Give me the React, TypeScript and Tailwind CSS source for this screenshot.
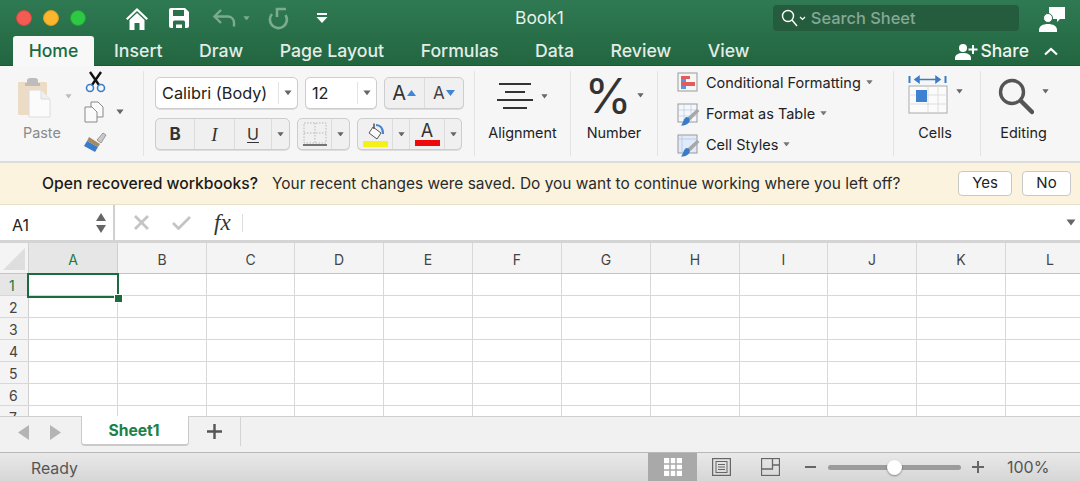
import React from "react";

const Caret = ({ c = "#666", w = 8, className = "" }: { c?: string; w?: number; className?: string }) => (
  <svg width={w} height={w * 0.7} viewBox="0 0 10 7" className={`shrink-0 ${className}`}>
    <path d="M0.5 0.5h9L5 6.5z" fill={c} />
  </svg>
);

const tabs = ["Insert", "Draw", "Page Layout", "Formulas", "Data", "Review", "View"];
const colW = [89, 89, 88, 89, 89, 89, 89, 89, 88, 89, 89, 89];
const cols = ["A", "B", "C", "D", "E", "F", "G", "H", "I", "J", "K", "L"];
const rows = [1, 2, 3, 4, 5, 6];

function Title() {
  return (
    <div className="h-[36px] flex items-center pl-[16px]">
      <div className="flex gap-[11px]">
        <span className="w-[16px] h-[16px] rounded-full bg-[#f25c55] border border-[#d8453f]" />
        <span className="w-[16px] h-[16px] rounded-full bg-[#fbb62d] border border-[#dc9b1f]" />
        <span className="w-[16px] h-[16px] rounded-full bg-[#2fc845] border border-[#1fa434]" />
      </div>
      <svg width="24" height="24" viewBox="0 0 24 24" className="ml-[39px]">
        <path d="M1 12.500 12 2l11 10.500-1.600 1.600L12 5 2.600 14.100z" fill="#fff" />
        <path d="M4.500 14 12 7l7.500 7v10h-5v-7h-5v7h-5z" fill="#fff" />
      </svg>
      <svg width="22" height="22" viewBox="0 0 22 22" className="ml-[19px]">
        <path d="M1 3a2 2 0 0 1 2-2h14l4 4v14a2 2 0 0 1-2 2H3a2 2 0 0 1-2-2z" fill="#fff" />
        <rect x="5" y="3" width="11" height="6" fill="#2a7049" />
        <path d="M5 21v-6a1.500 1.500 0 0 1 1.500-1.500h9A1.500 1.500 0 0 1 17 15v6h-3v-3.500H8V21z" fill="#2a7049" />
      </svg>
      <svg width="25" height="22" viewBox="0 0 25 22" className="ml-[22px]" fill="none" stroke="#7dab90" strokeWidth="2.400">
        <path d="M9 3 2.500 9.500 9 16" />
        <path d="M3 9.500h13a6 6 0 0 1 6 6v4" />
      </svg>
      <Caret c="#7dab90" w={7} className="ml-[6px]" />
      <svg width="22" height="24" viewBox="0 0 22 24" className="ml-[17px]" fill="none" stroke="#7dab90" strokeWidth="2.600">
        <path d="M5 8A8.500 8.500 0 1 0 18.500 9" />
        <path d="M19 3H10v8" />
      </svg>
      <svg width="12" height="12" viewBox="0 0 12 12" className="ml-[27px]">
        <rect x="1" y="1" width="10" height="2" fill="#fff" />
        <path d="M0.500 5h11L6 11z" fill="#fff" />
      </svg>
      <span className="ml-[187px] text-[17.400px] text-[#e6efe9] leading-none">Book1</span>
      <div className="ml-[209px] w-[246px] h-[26px] rounded-[4px] bg-[#255c3d] flex items-center pl-[8px]">
        <svg width="17" height="18" viewBox="0 0 17 18" fill="none" stroke="#fff" strokeWidth="1.400">
          <circle cx="7" cy="7" r="5.500" />
          <path d="m11 11 5 6" />
        </svg>
        <svg width="7" height="5" viewBox="0 0 7 5" fill="none" stroke="#fff" strokeWidth="1.200" className="ml-[1px]">
          <path d="m1 1 2.500 2.500L6 1" />
        </svg>
        <span className="ml-[5px] text-[16.400px] text-[#87a896] font-medium leading-none">Search Sheet</span>
      </div>
      <svg width="26" height="27" viewBox="0 0 26 27" className="ml-[20px]">
        <path d="M10 2h16v12h-5l-3 3v-3h-8z" fill="#fff" />
        <circle cx="9" cy="13" r="4.500" fill="#fff" stroke="#2a7049" strokeWidth="1" />
        <path d="M0 27v-2c0-4 4-6 9-6s9 2 9 6v2z" fill="#fff" />
      </svg>
    </div>
  );
}

function TabRow() {
  return (
    <div className="h-[30px] flex items-stretch pl-[13px] pr-[22px]">
      <div className="w-[81px] bg-[#f8f8f8] rounded-t-[3px] flex items-center justify-center text-[17.600px] text-[#1c6b3f] font-medium">Home</div>
      <div className="flex items-center gap-[36.500px] ml-[20px] text-[17.700px] text-[#e4ece7] font-medium">
        {tabs.map((t) => (
          <span key={t}>{t}</span>
        ))}
      </div>
      <div className="ml-auto flex items-center text-[#eef4f0] font-medium text-[17.500px]">
        <svg width="24" height="17" viewBox="0 0 24 17">
          <circle cx="8" cy="5" r="4" fill="#fff" />
          <path d="M0 17v-2c0-3 3-5 8-5s8 2 8 5v2z" fill="#fff" />
          <path d="M18 2v9M13.500 6.500h9" stroke="#fff" strokeWidth="2" />
        </svg>
        <span className="ml-[2px]">Share</span>
        <svg width="14" height="9" viewBox="0 0 14 9" fill="none" stroke="#fff" strokeWidth="2.200" className="ml-[15px]">
          <path d="m1 7.500 6-5.500 6 5.500" />
        </svg>
      </div>
    </div>
  );
}

const Sep = () => <div className="w-px self-stretch my-[5px] bg-[#e3e3e3]" />;

const Box = ({ className = "", children }: { className?: string; children: React.ReactNode }) => (
  <div className={`h-[32px] rounded-[5px] border border-[#cdcdcd] flex items-center bg-[#f0f0f0] shadow-[0_1px_0_#ddd] ${className}`}>{children}</div>
);

const Seg = ({ className = "", children }: { className?: string; children: React.ReactNode }) => (
  <div className={`h-full flex items-center justify-center border-r border-[#dcdcdc] last:border-r-0 ${className}`}>{children}</div>
);

function ClipGroup() {
  return (
    <div className="w-[143px] shrink-0 flex pl-[18px]">
      <div className="w-[49px] flex flex-col items-start">
        <svg width="33" height="41" viewBox="0 0 33 41" className="mt-[11px]">
          <rect x="0" y="5" width="29" height="33" rx="1" fill="#ecdcc6" />
          <path d="M9 6V3a3 3 0 0 1 3-2h5a3 3 0 0 1 3 2v3h2v3H7V6z" fill="#bdbdbd" />
          <path d="M11 13h12l9 9v18H11z" fill="#fbfbfb" stroke="#dcdcdc" />
          <path d="M23 13v9h9" fill="#f0f0f0" stroke="#dcdcdc" />
        </svg>
        <span className="mt-[8px] ml-[5px] text-[14.400px] text-[#8a8a8a] leading-none">Paste</span>
      </div>
      <Caret c="#bcbcbc" w={7} className="mt-[28px] -ml-[2px]" />
      <div className="ml-[12px] flex flex-col items-start">
        <svg width="21" height="22" viewBox="0 0 21 22" className="mt-[5px] ml-[1px]" fill="none">
          <path d="m5 1 9 13M16 1 7 14" stroke="#111" strokeWidth="2.400" />
          <circle cx="5" cy="17" r="3.500" stroke="#3a7cc8" strokeWidth="1.600" />
          <circle cx="16" cy="17" r="3.500" stroke="#3a7cc8" strokeWidth="1.600" />
        </svg>
        <div className="flex items-center mt-[8px]">
          <svg width="20" height="22" viewBox="0 0 20 22" fill="#fafafa" stroke="#888" strokeWidth="1">
            <path d="M7 1h7l5 5v10H7z" />
            <path d="M1 6h7l5 5v10H1z" />
          </svg>
          <Caret c="#666" w={8} className="ml-[12px]" />
        </div>
        <svg width="24" height="22" viewBox="0 0 24 22" className="mt-[8px] -ml-[1px]">
          <path d="m14 9 6-7 3 2-5 8z" fill="#c9c9c9" stroke="#888" strokeWidth="0.800" />
          <path d="m6 6 11 7-2 3-11-6z" fill="#a68a63" />
          <path d="m4 10 11 6-3 5-11-6z" fill="#3a7cc8" />
        </svg>
      </div>
    </div>
  );
}

function FontGroup() {
  return (
    <div className="w-[330px] shrink-0 pl-[11px] pt-[11px] flex flex-col gap-[9px]">
      <div className="flex gap-[7px]">
        <Box className="w-[143px] bg-white">
          <span className="pl-[6px] text-[16.300px] text-[#222] flex-1 leading-none">Calibri (Body)</span>
          <div className="w-[19px] h-[22px] border-l border-[#e3e3e3] flex items-center justify-center"><Caret /></div>
        </Box>
        <Box className="w-[72px] bg-white">
          <span className="pl-[6px] text-[16.300px] text-[#222] flex-1 leading-none">12</span>
          <div className="w-[19px] h-[22px] border-l border-[#e3e3e3] flex items-center justify-center"><Caret /></div>
        </Box>
        <Box className="w-[80px]">
          <Seg className="w-[40px]">
            <span className="text-[20px] text-[#333] leading-none">A</span>
            <svg width="9" height="6" viewBox="0 0 9 6" className="ml-[1px]"><path d="M0 6h9L4.500 0z" fill="#3f86d4" /></svg>
          </Seg>
          <Seg className="w-[39px]">
            <span className="text-[17px] text-[#444] leading-none">A</span>
            <svg width="9" height="6" viewBox="0 0 9 6" className="ml-[1px]"><path d="M0 0h9L4.500 6z" fill="#3f86d4" /></svg>
          </Seg>
        </Box>
      </div>
      <div className="flex gap-[7px]">
        <Box className="w-[135px]">
          <Seg className="w-[39px]"><span className="text-[17px] font-bold text-[#333] leading-none">B</span></Seg>
          <Seg className="w-[40px]"><span className="text-[19px] italic text-[#333] leading-none font-['Liberation_Serif']">I</span></Seg>
          <Seg className="w-[37px]"><span className="text-[16px] underline underline-offset-2 text-[#333] leading-none">U</span></Seg>
          <Seg className="w-[17px]"><Caret w={7} /></Seg>
        </Box>
        <Box className="w-[53px]">
          <Seg className="w-[35px]">
            <svg width="24" height="24" viewBox="0 0 24 24" fill="none">
              <path d="M1 1h22v20H1zM12 1v20M1 11h22" stroke="#aaa" strokeWidth="0.800" strokeDasharray="1.500 1.500" />
              <path d="M0 23h24" stroke="#555" strokeWidth="1.600" />
            </svg>
          </Seg>
          <Seg className="w-[17px]"><Caret w={7} /></Seg>
        </Box>
        <Box className="w-[105px]">
          <Seg className="w-[35px] flex-col">
            <svg width="20" height="18" viewBox="0 0 20 18" className="mb-[1px]">
              <path d="m8 5 8 6-4 6-8-6z" fill="#fafafa" stroke="#555" />
              <path d="M9 7V1.500" stroke="#555" strokeWidth="1.500" />
              <path d="M11 3c4 0 7 3 7 9" fill="none" stroke="#3f86d4" strokeWidth="2.200" />
            </svg>
            <span className="w-[25px] h-[6px] bg-[#f5f01a]" />
          </Seg>
          <Seg className="w-[17px]"><Caret w={7} /></Seg>
          <Seg className="w-[35px] flex-col">
            <span className="text-[18px] text-[#333] leading-[18px]">A</span>
            <span className="w-[25px] h-[6px] bg-[#ee0a0a]" />
          </Seg>
          <Seg className="w-[16px]"><Caret w={7} /></Seg>
        </Box>
      </div>
    </div>
  );
}

const Label = ({ children }: { children: React.ReactNode }) => (
  <span className="text-[14.400px] text-[#222] leading-none">{children}</span>
);

const Rule = ({ w }: { w: string }) => <div className={`h-[2px] bg-[#333] ${w}`} />;

function StyleRow({ label, kind }: { label: string; kind: number }) {
  return (
    <div className="flex items-center h-[31px]">
      <svg width="23" height="25" viewBox="0 0 23 25" className="shrink-0">
        <rect x="1" y="2" width="19" height="18" fill={kind === 0 ? "#f6f6f6" : kind === 1 ? "#f4f7fb" : "#dfeafa"} stroke="#999" />
        {kind === 0 ? (
          <>
            <rect x="4" y="5" width="5" height="13" fill="#5b95dc" />
            <rect x="4" y="5" width="9" height="3" fill="#e25c5c" />
            <rect x="4" y="11" width="14" height="4" fill="#e25c5c" />
          </>
        ) : (
          <>
            {kind === 1 ? (
              <path d="M1 8h19M1 14h19M7 2v18M14 2v18" stroke="#b8c8dc" strokeWidth="0.700" />
            ) : (
              <path d="M1 6h19M5 2v18" stroke="#b8c8dc" strokeWidth="0.800" />
            )}
            <path d="m20 7 2.500 2-9 9-3-2.500z" fill="#a7a7a7" />
            <path d="M9.500 15c3 0 4.500 3 2.500 5.500s-5 3-8 3c2-2 2.500-7.500 5.500-8.500z" fill="#3a7cc8" />
          </>
        )}
      </svg>
      <span className="ml-[6px] text-[14.500px] text-[#222] leading-none">{label}</span>
      <Caret c="#777" w={7} className="ml-[5px] -mt-[3px]" />
    </div>
  );
}

function Ribbon() {
  return (
    <div className="h-[97px] bg-[#f6f6f6] flex border-b-2 border-[#dcdcdc]">
      <ClipGroup />
      <Sep />
      <FontGroup />
      <Sep />
      <div className="w-[95px] shrink-0 flex flex-col items-center pt-[17px]">
        <div className="flex items-start h-[34px]">
          <div className="flex flex-col items-center gap-[6px] w-[36px]">
            <Rule w="w-[32px]" />
            <Rule w="w-[20px]" />
            <Rule w="w-[36px]" />
            <Rule w="w-[24px]" />
          </div>
          <Caret w={7} className="ml-[8px] mt-[11px]" />
        </div>
        <div className="mt-[3px]"><Label>Alignment</Label></div>
      </div>
      <Sep />
      <div className="w-[86px] shrink-0 flex flex-col items-center pt-[5px]">
        <div className="flex items-start h-[46px]">
          <span className="text-[48px] font-normal text-[#333] leading-[50px]">%</span>
          <Caret w={7} className="ml-[5px] mt-[22px]" />
        </div>
        <div className="mt-[3px]"><Label>Number</Label></div>
      </div>
      <Sep />
      <div className="w-[235px] shrink-0 pl-[19px] pt-[2px]">
        <StyleRow label="Conditional Formatting" kind={0} />
        <StyleRow label="Format as Table" kind={1} />
        <StyleRow label="Cell Styles" kind={2} />
      </div>
      <Sep />
      <div className="w-[86px] shrink-0 flex flex-col items-center pt-[9px] pr-[4px]">
        <div className="flex items-start h-[42px]">
          <svg width="40" height="40" viewBox="0 0 40 40">
            <path d="M1.500 1v7M37.500 1v7" stroke="#3a7cc8" strokeWidth="2" />
            <path d="M8 4.500h23M11 1.500 7 4.500l4 3zM28 1.500l4 3-4 3z" stroke="#3a7cc8" strokeWidth="1.500" fill="#3a7cc8" />
            <rect x="1" y="11" width="38" height="27" fill="#fbfbfb" stroke="#aaa" />
            <path d="M1 20h38M1 29h38M20 11v27M30 11v27" stroke="#ddd" />
            <rect x="8" y="15" width="11" height="12" fill="#3f80d0" />
          </svg>
          <Caret w={7} className="ml-[8px] mt-[14px]" />
        </div>
        <div className="mt-[3px]"><Label>Cells</Label></div>
      </div>
      <Sep />
      <div className="w-[85px] shrink-0 flex flex-col items-center pt-[12px]">
        <div className="flex items-start h-[39px]">
          <svg width="36" height="37" viewBox="0 0 36 37" fill="none">
            <circle cx="14" cy="14" r="11.500" stroke="#555" strokeWidth="3.400" />
            <path d="m23 23 11 11" stroke="#555" strokeWidth="4.500" strokeLinecap="round" />
          </svg>
          <Caret w={7} className="ml-[8px] mt-[11px]" />
        </div>
        <div className="mt-[3px]"><Label>Editing</Label></div>
      </div>
    </div>
  );
}

function Notice() {
  return (
    <div className="h-[42px] bg-[#fbf3de] flex items-center pl-[42px] pr-[9px] border-b border-[#e6dfca]">
      <span className="text-[15.700px] text-[#1a1a1a] font-medium">Open recovered workbooks?</span>
      <span className="ml-[14px] text-[15.450px] text-[#2a2a2a]">Your recent changes were saved. Do you want to continue working where you left off?</span>
      <div className="ml-auto flex gap-[10px]">
        <div className="w-[54px] h-[25px] bg-white rounded-[4px] border border-[#c8c8c8] flex items-center justify-center text-[15px] text-[#222]">Yes</div>
        <div className="w-[49px] h-[25px] bg-white rounded-[4px] border border-[#c8c8c8] flex items-center justify-center text-[15px] text-[#222]">No</div>
      </div>
    </div>
  );
}

function Formula() {
  return (
    <div className="h-[38px] bg-white flex border-b-[3px] border-[#d4d4d4]">
      <div className="w-[115px] shrink-0 flex items-center pl-[12px] border-r-2 border-[#d0d0d0]">
        <span className="text-[16px] text-[#222] flex-1 leading-none mt-[4px]">A1</span>
        <div className="flex flex-col gap-[4px] pr-[7px]">
          <svg width="10" height="8" viewBox="0 0 10 8"><path d="M0 8h10L5 0z" fill="#666" /></svg>
          <svg width="10" height="8" viewBox="0 0 10 8"><path d="M0 0h10L5 8z" fill="#666" /></svg>
        </div>
      </div>
      <div className="flex items-center flex-1 pl-[19px] pr-[4px]">
        <svg width="15" height="15" viewBox="0 0 15 15" stroke="#c4c4c4" strokeWidth="2.800">
          <path d="m1 1 13 13M14 1 1 14" />
        </svg>
        <svg width="19" height="15" viewBox="0 0 19 15" fill="none" stroke="#c4c4c4" strokeWidth="2.800" className="ml-[23px]">
          <path d="m1 8 5.500 5.500L18 2" />
        </svg>
        <span className="ml-[23px] text-[23px] italic text-[#333] leading-none font-['Liberation_Serif']">fx</span>
        <div className="ml-[11px] w-px h-[18px] bg-[#ddd]" />
        <Caret c="#666" w={10} className="ml-auto" />
      </div>
    </div>
  );
}

function Sheet() {
  return (
    <div className="h-[173px] overflow-hidden bg-white relative">
      <div className="flex h-[31px] bg-[#f4f4f4] border-b border-[#c4c4c4]">
        <div className="w-[29px] shrink-0 border-r border-[#d0d0d0] flex items-end justify-end p-[3px]">
          <svg width="22" height="22" viewBox="0 0 22 22"><path d="M22 0v22H0z" fill="#dedede" /></svg>
        </div>
        {cols.map((c, i) => (
          <div
            key={c}
            style={{ width: colW[i] }}
            className={
              i === 0
                ? "shrink-0 border-r border-[#d0d0d0] bg-[#e6e6e6] flex items-center justify-center pt-[3px] text-[14px] text-[#1c7a45]"
                : "shrink-0 border-r border-[#d8d8d8] flex items-center justify-center pt-[3px] text-[14px] text-[#444]"
            }
          >
            {c}
          </div>
        ))}
      </div>
      {rows.map((r) => (
        <div key={r} className="flex h-[22px] border-b border-[#d8d8d8]">
          <div
            className={
              r === 1
                ? "w-[29px] shrink-0 bg-[#e6e6e6] border-r border-[#d0d0d0] pl-[9px] text-[14px] leading-[23px] text-[#1c7a45]"
                : "w-[29px] shrink-0 bg-[#f4f4f4] border-r border-[#d0d0d0] pl-[9px] text-[14px] leading-[23px] text-[#444]"
            }
          >
            {r}
          </div>
          {cols.map((c, i) => (
            <div key={c} style={{ width: colW[i] }} className="shrink-0 border-r border-[#d8d8d8]" />
          ))}
        </div>
      ))}
      <div className="flex h-[22px]">
        <div className="w-[29px] shrink-0 bg-[#f4f4f4] border-r border-[#d0d0d0] pl-[9px] pt-[3px] text-[14px] leading-[17px] text-[#444]">7</div>
        {cols.map((c, i) => (
          <div key={c} style={{ width: colW[i] }} className="shrink-0 border-r border-[#d8d8d8]" />
        ))}
      </div>
      <div className="absolute left-[27px] top-[30px] w-[92px] h-[25px] border-2 border-[#1c6b3f]" />
      <div className="absolute left-[114px] top-[51px] w-[7px] h-[7px] bg-[#1c6b3f] border border-white box-content" />
    </div>
  );
}

function SheetTabs() {
  return (
    <div className="h-[36px] bg-[#f1f1f1] flex border-t border-[#cfcfcf]">
      <div className="w-[81px] shrink-0 flex items-center pl-[18px] gap-[21px] pb-[4px]">
        <svg width="11" height="15" viewBox="0 0 11 15"><path d="M11 0v15L0 7.500z" fill="#b4b4b4" /></svg>
        <svg width="11" height="15" viewBox="0 0 11 15"><path d="M0 0v15l11-7.500z" fill="#b4b4b4" /></svg>
      </div>
      <div className="w-[108px] h-[30px] bg-white rounded-b-[4px] border-b-2 border-x border-[#cacaca] -mt-px flex items-center justify-center pr-[2px] pt-[2px] text-[15.700px] font-bold text-[#1c8248]">Sheet1</div>
      <div className="w-[52px] h-[29px] border-r border-[#d4d4d4] flex items-center justify-center">
        <svg width="15" height="15" viewBox="0 0 15 15"><path d="M7.500 0v15M0 7.500h15" stroke="#555" strokeWidth="2.400" /></svg>
      </div>
    </div>
  );
}

function Status() {
  return (
    <div className="h-[29px] bg-gradient-to-b from-[#e9e9e9] to-[#d6d6d6] flex border-t border-[#b8b8b8] text-[#555]">
      <span className="ml-[31px] w-[47px] shrink-0 text-[15.800px] leading-[31px]">Ready</span>
      <div className="ml-[570px] w-[49px] bg-[#a9a9a9] flex items-center justify-center">
        <svg width="18" height="18" viewBox="0 0 18 18">
          <rect width="18" height="18" fill="#fff" />
          <path d="M6 0v18M12 0v18M0 6h18M0 12h18" stroke="#a9a9a9" strokeWidth="1.500" />
        </svg>
      </div>
      <div className="w-[49px] flex items-center justify-center">
        <svg width="19" height="18" viewBox="0 0 19 18" fill="none" stroke="#666">
          <rect x="0.500" y="0.500" width="18" height="17" strokeWidth="1.400" />
          <rect x="4" y="3.500" width="11" height="11" />
          <path d="M6 6.500h7M6 9h7M6 11.500h7" />
        </svg>
      </div>
      <div className="w-[48px] flex items-center justify-center">
        <svg width="19" height="18" viewBox="0 0 19 18" fill="none" stroke="#666" strokeWidth="1.300">
          <rect x="0.500" y="0.500" width="18" height="17" />
          <path d="M0.500 11h11V0.500M12 7h6.500" />
        </svg>
      </div>
      <div className="ml-[11px] flex items-center">
        <div className="w-[11px] h-[2px] bg-[#666]" />
        <div className="ml-[12px] w-[133px] h-[5px] rounded-full bg-[#9b9b9b] flex items-center">
          <div className="ml-[59px] w-[15px] h-[15px] rounded-full bg-white shadow-[0_1px_2px_rgba(0,0,0,0.4)]" />
        </div>
        <svg width="12" height="12" viewBox="0 0 12 12" className="ml-[11px]"><path d="M6 0v12M0 6h12" stroke="#666" strokeWidth="2" /></svg>
        <span className="ml-[23px] text-[16px] leading-none">100%</span>
      </div>
    </div>
  );
}

export default function App() {
  return (
    <div className="w-[1080px] h-[481px] overflow-hidden font-['Inter','Liberation_Sans',sans-serif] bg-white">
      <div className="h-[66px] bg-gradient-to-b from-[#2f7a53] to-[#226640] border-b border-[#1a5a36]">
        <Title />
        <TabRow />
      </div>
      <Ribbon />
      <Notice />
      <Formula />
      <Sheet />
      <SheetTabs />
      <Status />
    </div>
  );
}
